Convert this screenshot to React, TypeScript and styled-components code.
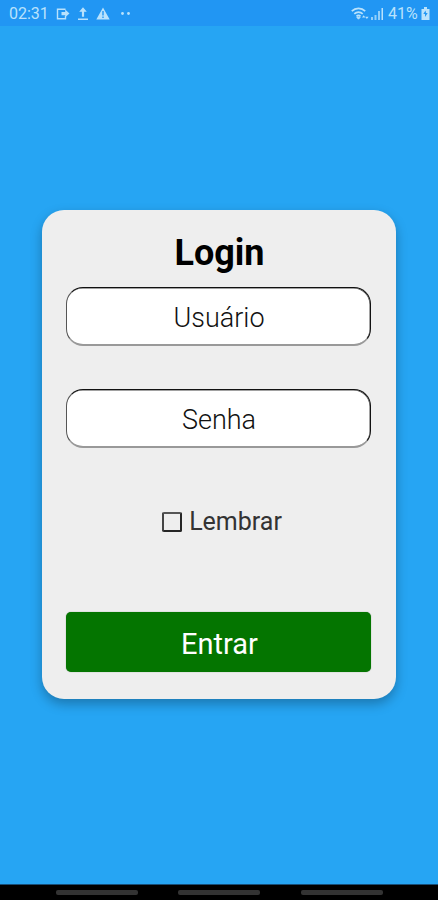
import React from "react";
import styled, { createGlobalStyle } from "styled-components";

const GlobalStyle = createGlobalStyle`
  * { box-sizing: border-box; }
  body { margin: 0; background: #26a5f3; font-family: Roboto, sans-serif; }
`;

const Screen = styled.div`
  width: 100%;
  height: 900px;
  display: flex;
  flex-direction: column;
  background: #26a5f3;
  overflow: hidden;
`;

const StatusBar = styled.header`
  height: 26px;
  flex: none;
  display: flex;
  justify-content: space-between;
  padding: 1px 8px 0 9px;
  background: #2196f3;
  color: #b9e2fc;
  font-size: 16px;
  line-height: 26px;
`;

const StatusGroup = styled.div`
  display: flex;
  align-items: center;
`;

const StatusText = styled.span<{ $width: number; $gap?: number }>`
  width: ${({ $width }) => $width}px;
  margin-left: ${({ $gap = 0 }) => $gap}px;
  white-space: nowrap;
`;

const StatusIcon = styled.svg<{ $gap?: number }>`
  flex: none;
  margin-left: ${({ $gap = 0 }) => $gap}px;
`;

const Main = styled.main`
  flex: 1;
  display: flex;
  justify-content: center;
  align-items: flex-start;
  padding-top: 184px;
`;

const Card = styled.form`
  width: 354px;
  height: 489px;
  display: flex;
  flex-direction: column;
  padding: 20px 24px 0;
  border-radius: 22px;
  background: #eee;
  box-shadow: 0 5px 12px rgba(0, 0, 0, 0.28);
`;

const Title = styled.h1`
  margin: 0 0 13px;
  height: 44px;
  padding-left: 1px;
  text-align: center;
  font-size: 36px;
  line-height: 46px;
  font-weight: 700;
  color: #000;
`;

const Field = styled.input`
  width: 305px;
  height: 59px;
  flex: none;
  margin-bottom: 43px;
  padding: 4px 0 0 1px;
  border: 1px solid #111;
  border-bottom: 2px solid #999;
  border-left-color: #555;
  border-radius: 17px;
  background: #fff;
  box-shadow: inset -0.5px 0.5px 0 #444;
  text-align: center;
  font: 300 27px Roboto, sans-serif;
  outline: none;

  &::placeholder {
    color: #111;
    opacity: 1;
  }
`;

const Remember = styled.label`
  height: 36px;
  margin: 12px 0 73px;
  padding: 1px 0 0 6px;
  display: flex;
  align-items: center;
  justify-content: center;
  gap: 7px;
  font-size: 25px;
  color: #333;
`;

const Checkbox = styled.input`
  appearance: none;
  width: 20px;
  height: 20px;
  margin: 0;
  border: 2px solid #262626;
  border-top-color: #555;
  border-left-color: #444;
  border-radius: 2px;
`;

const Submit = styled.button`
  width: 305px;
  height: 60px;
  flex: none;
  padding: 4px 0 0 2px;
  border: 0;
  border-radius: 5px;
  background: #047500;
  color: #fff;
  font: 400 29px Roboto, sans-serif;
  box-shadow: 0 0 1px rgba(0, 60, 0, 0.6);
`;

const NavigationBar = styled.nav`
  height: 16px;
  flex: none;
  display: flex;
  justify-content: center;
  gap: 40.5px;
  padding-top: 5px;
  border-top: 1px solid #174e78;
  background: #000;
`;

const NavigationHandle = styled.span`
  width: 82px;
  height: 5px;
  border-radius: 2px;
  background: #333;
`;

export default function App() {
  return (
    <>
      <GlobalStyle />
      <Screen>
        <StatusBar>
          <StatusGroup>
            <StatusText $width={40}>02:31</StatusText>
            <StatusIcon $gap={7} width="14" height="14" viewBox="0 0 14 14" fill="none" stroke="currentColor" strokeWidth="1.4">
              <path d="M9.5 2.2H1.5v9.6h8V9" />
              <path d="M5.5 5h3.7V2.5L13.5 6.5 9.2 10.2V8.3H5.5z" fill="currentColor" stroke="none" />
            </StatusIcon>
            <StatusIcon $gap={7} width="12" height="14" viewBox="0 0 12 14" fill="currentColor">
              <path d="M6 .2 9.8 4.7H7.1v5.1H4.9V4.7H2.2zM1 11.5h10V13H1z" />
            </StatusIcon>
            <StatusIcon $gap={7} width="14" height="13" viewBox="0 0 14 13" fill="currentColor">
              <path fillRule="evenodd" d="M7 .5 13.7 12.5H.3zM6.3 4v4.5h1.4V4zm0 5.5V11h1.4V9.5z" />
            </StatusIcon>
            <StatusIcon $gap={10} width="12" height="4" viewBox="0 0 12 4" fill="currentColor">
              <circle cx="2.5" cy="1.5" r="1.4" />
              <circle cx="8.5" cy="1.5" r="1.4" />
            </StatusIcon>
          </StatusGroup>
          <StatusGroup>
            <StatusIcon width="19" height="14" viewBox="0 0 19 14" fill="none" stroke="currentColor" strokeWidth="1.7">
              <path d="M.8 4.2C4.5.5 10.5.5 14.2 4.2M3.3 6.9c2.4-2.4 6-2.4 8.4 0M5.5 9.3c1.2-1.2 2.8-1.2 4 0" />
              <path d="m7.5 12.2-1.7-2h3.4z" strokeWidth="1" fill="currentColor" />
              <path d="m11 10.5 1.7-2.3 1.7 2.3zM14.2 9.7h3.4L15.9 12z" fill="currentColor" stroke="none" />
            </StatusIcon>
            <StatusIcon $gap={1} width="13" height="13" viewBox="0 0 13 13" fill="currentColor">
              <path d="M0 10h2v3H0zm3.5-2h2v5h-2zM7 4h2v9H7z" opacity=".75" />
              <path d="M10.5 1H12v12h-1.5z" />
            </StatusIcon>
            <StatusText $gap={4} $width={33}>41%</StatusText>
            <StatusIcon width="9" height="13" viewBox="0 0 9 13">
              <path d="M3 0h3v2h2.5v11h-8V2H3z" fill="currentColor" />
              <path d="M4.5 3.5 2.3 7H4v3l2.7-4H5z" fill="#2196f3" />
            </StatusIcon>
          </StatusGroup>
        </StatusBar>
        <Main>
          <Card onSubmit={(event) => event.preventDefault()}>
            <Title>Login</Title>
            <Field type="text" placeholder="Usuário" aria-label="Usuário" />
            <Field type="password" placeholder="Senha" aria-label="Senha" />
            <Remember>
              <Checkbox type="checkbox" />
              Lembrar
            </Remember>
            <Submit type="submit">Entrar</Submit>
          </Card>
        </Main>
        <NavigationBar>
          <NavigationHandle />
          <NavigationHandle />
          <NavigationHandle />
        </NavigationBar>
      </Screen>
    </>
  );
}
